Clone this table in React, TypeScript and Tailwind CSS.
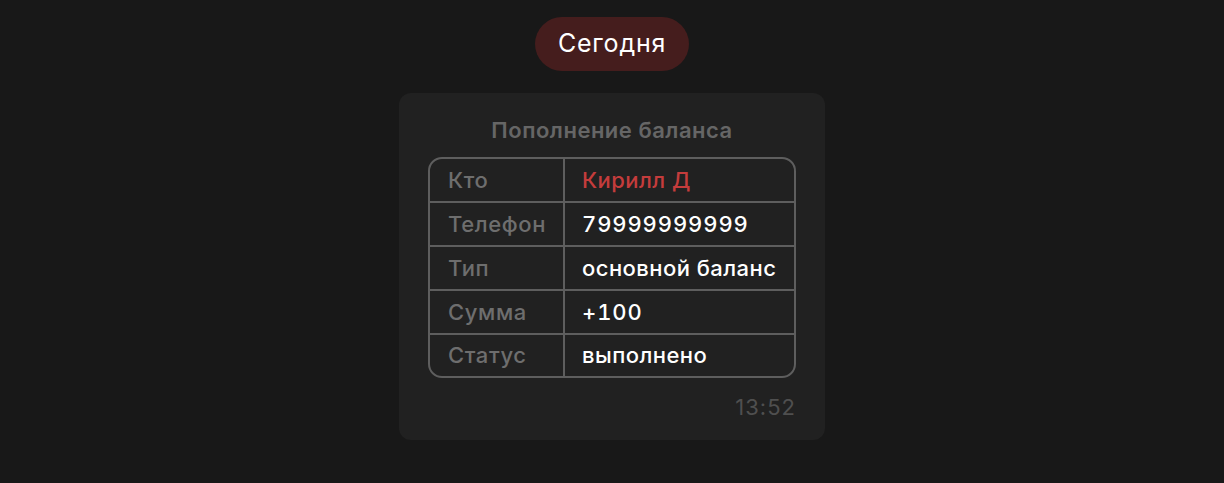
import React from "react";

const rows: { label: string; value: string; red?: boolean; num?: boolean }[] = [
  { label: "Кто", value: "Кирилл Д", red: true },
  { label: "Телефон", value: "79999999999", num: true },
  { label: "Тип", value: "основной баланс" },
  { label: "Сумма", value: "+100", num: true },
  { label: "Статус", value: "выполнено" },
];

const rowH = ["h-[42px]", "h-[44px]", "h-[44px]", "h-[44px]", "h-[43px]"];

export default function App() {
  return (
    <div
      className="min-h-[483px] w-full bg-[#181818] flex flex-col items-center pt-[17px]"
      style={{ fontFamily: "Inter, 'Noto Sans', sans-serif" }}
    >
      <div className="h-[54px] px-[23px] rounded-full bg-[#451d1d] flex items-center text-white text-[25px] font-normal tracking-[0.8px]">
        Сегодня
      </div>
      <div className="mt-[22px] w-[426px] rounded-[12px] bg-[#212121] pt-[18px] pb-[18px] px-[29px] flex flex-col">
        <div className="text-center text-[#666666] text-[22px] font-semibold leading-[38px] tracking-[0.5px]">
          Пополнение баланса
        </div>
        <div className="mt-[8px] border-2 border-[#5e5e5e] rounded-[14px] overflow-hidden">
          {rows.map((r, i) => (
            <div
              key={r.label}
              className={`flex ${rowH[i]} ${i > 0 ? "border-t-2 border-[#5e5e5e]" : ""}`}
            >
              <div className="w-[135px] border-r-2 border-[#5e5e5e] flex items-center pl-[18px] text-[22px] font-medium text-[#6e6e6e] tracking-[0.6px]">
                {r.label}
              </div>
              <div
                className={`flex-1 flex items-center pl-[17px] text-[22px] font-medium ${
                  r.red ? "text-[#c43c3c]" : "text-white"
                } ${r.num ? "tabular-nums tracking-[0.9px]" : "tracking-[0.45px]"}`}
              >
                {r.value}
              </div>
            </div>
          ))}
        </div>
        <div className="mt-[14px] text-right text-[#4f4f4f] text-[22px] leading-[30px] tracking-[1px]">13:52</div>
      </div>
    </div>
  );
}
